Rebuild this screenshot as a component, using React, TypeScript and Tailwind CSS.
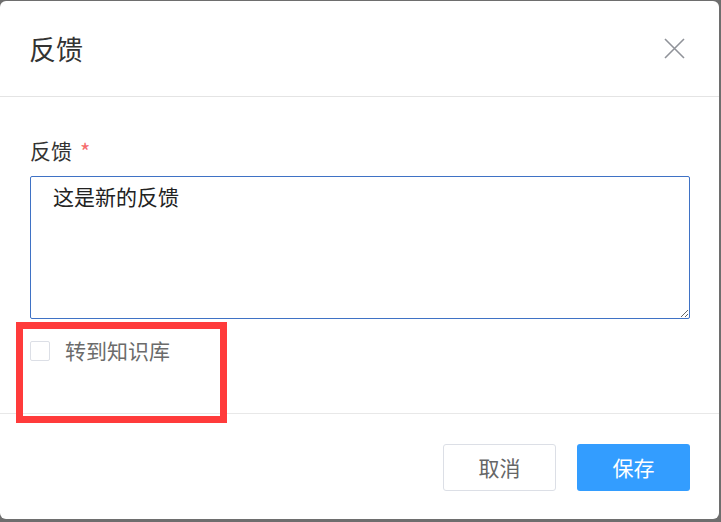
import { useEffect, useRef, useState } from "react";

const font = { fontFamily: '"Noto Sans CJK SC", "Liberation Sans", sans-serif' };

export default function App() {
  const [text, setText] = useState("这是新的反馈");
  const [toKb, setToKb] = useState(false);
  const areaRef = useRef<HTMLTextAreaElement>(null);

  // put the caret at the end of the text
  useEffect(() => {
    const el = areaRef.current;
    if (!el) return;
    el.focus();
    el.setSelectionRange(el.value.length, el.value.length);
  }, []);

  return (
    <div className="w-[721px] h-[522px] bg-[#6e6e6e] pt-[1px]" style={font}>
      <div className="relative w-[719px] h-[518px] bg-white rounded-[6px] flex flex-col">
        {/* header */}
        <div className="h-[96px] flex items-center justify-between pl-[29px] pr-[34px] border-b border-[#e4e4e4] shrink-0">
          <h2 className="text-[27px] text-[#333] leading-none">反馈</h2>
          <button className="text-[#909399]">
            <svg width="21" height="21" viewBox="0 0 21 21" fill="none" stroke="currentColor" strokeWidth="1.6">
              <path d="M1 1L20 20M20 1L1 20" />
            </svg>
          </button>
        </div>

        {/* body */}
        <div className="flex-1 px-[30px] pt-[42px]">
          <label className="flex items-center text-[21px] text-[#333] leading-none mb-[15px]">
            反馈
            <span className="text-[#f56c6c] ml-[8px] text-[22px] leading-none">*</span>
          </label>
          <textarea
            ref={areaRef}
            value={text}
            onChange={(e) => setText(e.target.value)}
            className="block w-[660px] h-[143px] border border-[#3f72c5] rounded-[2px] px-[22px] py-[6px] text-[21px] text-[#222] leading-[26px] outline-none resize-y caret-black"
          />
          <label className="flex items-center mt-[21px] gap-[15px] cursor-pointer w-fit">
            <input
              type="checkbox"
              checked={toKb}
              onChange={() => setToKb(!toKb)}
              className="appearance-none w-[20px] h-[20px] border border-[#dcdfe6] rounded-[2px] bg-white checked:bg-[#339dff]"
            />
            <span className="text-[21px] text-[#6b6b6b] leading-none">转到知识库</span>
          </label>
        </div>

        {/* footer */}
        <div className="h-[106px] border-t border-[#e8e8e8] flex items-start justify-end gap-[21px] pt-[30px] pr-[29px] shrink-0">
          <button className="w-[113px] h-[47px] border border-[#dcdfe6] rounded-[3px] text-[21px] text-[#666] bg-white">
            取消
          </button>
          <button className="w-[113px] h-[47px] rounded-[3px] text-[21px] text-white bg-[#339dff]">
            保存
          </button>
        </div>

        {/* annotation */}
        <div className="absolute left-[16px] top-[321px] w-[211px] h-[101px] border-[7px] border-[#ff3b3b] pointer-events-none" />
      </div>
    </div>
  );
}
